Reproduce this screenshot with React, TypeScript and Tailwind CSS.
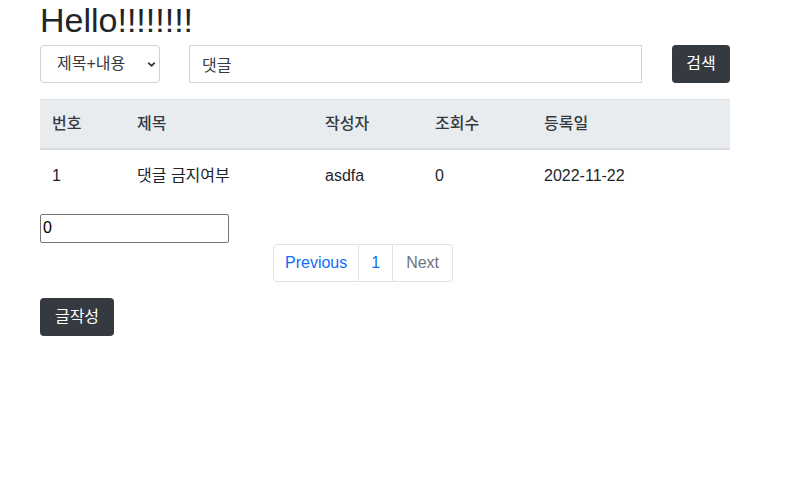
import { ChevronDown } from 'lucide-react';

const font = "font-['Liberation_Sans','Noto_Sans_CJK_KR',sans-serif]";

const rows = [
  { no: '1', title: '댓글 금지여부', writer: 'asdfa', views: '0', date: '2022-11-22' },
];

export default function App() {
  return (
    <div className={`${font} text-[#212529] bg-white min-h-[486px]`}>
      <div className="w-[690px] ml-10">
        <h1 className="text-[34px] leading-[41px]">Hello!!!!!!!!</h1>

        <div className="mt-1 flex items-center h-[38px]">
          <div className="relative w-[120px] h-[38px]">
            <select
              className="appearance-none w-full h-full rounded-[4px] border border-[#ced4da] bg-white pl-4 pr-8 text-base text-[#343a40] outline-none"
              defaultValue="tc"
            >
              <option value="tc">제목+내용</option>
              <option value="t">제목</option>
              <option value="c">내용</option>
            </select>
            <ChevronDown
              className="absolute right-[3px] top-[14px] w-[11px] h-[11px] text-[#343a40] pointer-events-none"
              strokeWidth={4}
            />
          </div>
          <input
            className="ml-[29px] w-[453px] h-[38px] border border-[#ced4da] px-3 text-base text-[#343a40] outline-none"
            defaultValue="댓글"
          />
          <button className="ml-auto h-[38px] w-[58px] rounded-[4px] bg-[#343a40] text-white text-base">
            검색
          </button>
        </div>

        <table className="mt-4 w-full border-collapse text-base table-fixed">
          <colgroup>
            <col className="w-[85px]" />
            <col className="w-[188px]" />
            <col className="w-[110px]" />
            <col className="w-[109px]" />
            <col className="w-[198px]" />
          </colgroup>
          <thead>
            <tr className="bg-[#e9ecef] border-t border-[#dee2e6] border-b-2 border-b-[#d9dde1]">
              {['번호', '제목', '작성자', '조회수', '등록일'].map((h) => (
                <th key={h} className="text-left font-medium px-3 h-[49px] text-[#343a40]">
                  {h}
                </th>
              ))}
            </tr>
          </thead>
          <tbody>
            {rows.map((r) => (
              <tr key={r.no}>
                <td className="px-3 pt-1 h-[50px]">{r.no}</td>
                <td className="px-3 pt-1">{r.title}</td>
                <td className="px-3 pt-1">{r.writer}</td>
                <td className="px-3 pt-1">{r.views}</td>
                <td className="px-3 pt-1">{r.date}</td>
              </tr>
            ))}
          </tbody>
        </table>

        <input
          className="mt-[15px] block w-[189px] h-[29px] border border-[#767676] rounded-[2px] px-[2px] text-base text-black outline-none"
          defaultValue="0"
        />

        <ul className="mt-px ml-[233px] flex h-[38px] text-base">
          <li className="border border-[#dee2e6] rounded-l-[4px] px-[11px] flex items-center text-[#0d6efd]">
            Previous
          </li>
          <li className="border border-l-0 border-[#dee2e6] px-3 flex items-center text-[#0d6efd]">1</li>
          <li className="border border-l-0 border-[#dee2e6] rounded-r-[4px] px-[13px] flex items-center text-[#6c757d]">
            Next
          </li>
        </ul>

        <button className="mt-4 h-[38px] w-[74px] rounded-[4px] bg-[#343a40] text-white text-base">
          글작성
        </button>
      </div>
    </div>
  );
}
